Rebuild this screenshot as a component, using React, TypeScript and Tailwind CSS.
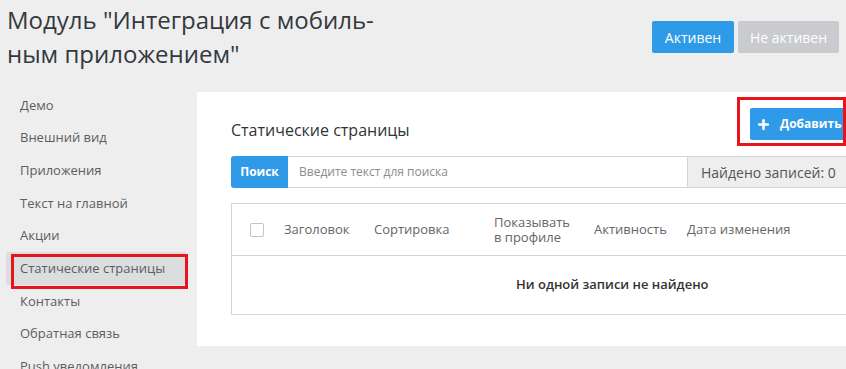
import React from 'react';
import { Plus } from 'lucide-react';

// Admin screen — module "mobile app integration", static pages list
const menu = [
  'Демо',
  'Внешний вид',
  'Приложения',
  'Текст на главной',
  'Акции',
  'Статические страницы',
  'Контакты',
  'Обратная связь',
  'Push уведомления',
];

const ACTIVE = 'Статические страницы';

export default function App() {
  return (
    <div className="relative h-[369px] w-[846px] overflow-hidden bg-[#eeeeee] font-['Open_Sans',sans-serif]">
      {/* Header */}
      <div className="flex h-[89px] items-start justify-between">
        <h1 className="pl-[7px] pt-[3px] text-[24px] font-normal leading-[34px] text-[#34393f]">
          Модуль "Интеграция с мобиль-
          <br />
          ным приложением"
        </h1>
        <div className="mr-[7px] mt-[21px] flex gap-[4px]">
          <button className="h-[32px] w-[82px] rounded-[2px] bg-[#2e9ae8] text-[14px] text-white">Активен</button>
          <button className="h-[32px] w-[101px] rounded-[2px] bg-[#c9cbce] text-[14px] text-white">Не активен</button>
        </div>
      </div>

      <div className="flex items-start">
        {/* Sidebar */}
        <nav className="flex w-[197px] shrink-0 flex-col">
          {menu.map((item) => (
            <div
              key={item}
              className={
                item === ACTIVE
                  ? 'ml-[6px] mr-[11px] flex h-[32.7px] items-center rounded-l-[3px] bg-[#dcdddf] pl-[14px] text-[13px] text-[#5a5e63]'
                  : 'flex h-[32.7px] items-center pl-[20px] text-[13px] text-[#5a5e63]'
              }
            >
              {item}
            </div>
          ))}
        </nav>

        {/* Main panel */}
        <div className="mt-[3px] w-[689px] shrink-0 bg-white px-[34px] pb-[31px] pt-[16px]">
          <div className="flex h-[32px] items-start justify-between">
            <h2 className="pt-[13px] text-[16px] font-normal leading-[18px] text-[#333]">Статические страницы</h2>
            <button className="flex h-[32px] w-[102px] items-center rounded-l-[2px] bg-[#2e9ae8] pl-[6px] text-[12px] font-bold text-white">
              <Plus size={15} strokeWidth={4} />
              <span className="ml-[9px]">Добавить</span>
            </button>
          </div>

          {/* Search */}
          <div className="mt-[16px] flex h-[32px]">
            <button className="w-[57px] rounded-l-[3px] bg-[#2e9ae8] text-[12px] font-bold text-white">Поиск</button>
            <div className="flex flex-1 items-center border border-l-0 border-[#d4d4d4] pl-[11px] text-[12px] text-[#8a8d90]">
              Введите текст для поиска
            </div>
            <div className="flex w-[164px] items-center border border-l-0 border-[#d4d4d4] bg-[#eeeeee] pl-[13px] text-[14px] text-[#555]">
              Найдено записей: 0
            </div>
          </div>

          {/* Table */}
          <div className="mt-[15px] border border-[#d4d4d4]">
            <div className="flex h-[52px] items-center border-b border-[#d4d4d4] text-[13px] leading-[15px] text-[#666]">
              <div className="w-[52px] pl-[18px]">
                <div className="h-[14px] w-[14px] rounded-[2px] border border-[#c4c4c4] bg-white" />
              </div>
              <div className="w-[90px]">Заголовок</div>
              <div className="w-[120px]">Сортировка</div>
              <div className="w-[100px]">
                Показывать
                <br />в профиле
              </div>
              <div className="w-[93px]">Активность</div>
              <div>Дата изменения</div>
            </div>
            <div className="flex h-[58px] items-center pl-[284px] text-[13px] font-semibold text-[#333]">
              Ни одной записи не найдено
            </div>
          </div>
        </div>
      </div>

      {/* Red annotation frames */}
      <div className="pointer-events-none absolute left-[11px] top-[254px] h-[35px] w-[177px] border-[3px] border-[#e8141c]" />
      <div className="pointer-events-none absolute left-[737px] top-[97px] h-[49px] w-[109px] border-[3px] border-[#e8141c]" />
    </div>
  );
}
